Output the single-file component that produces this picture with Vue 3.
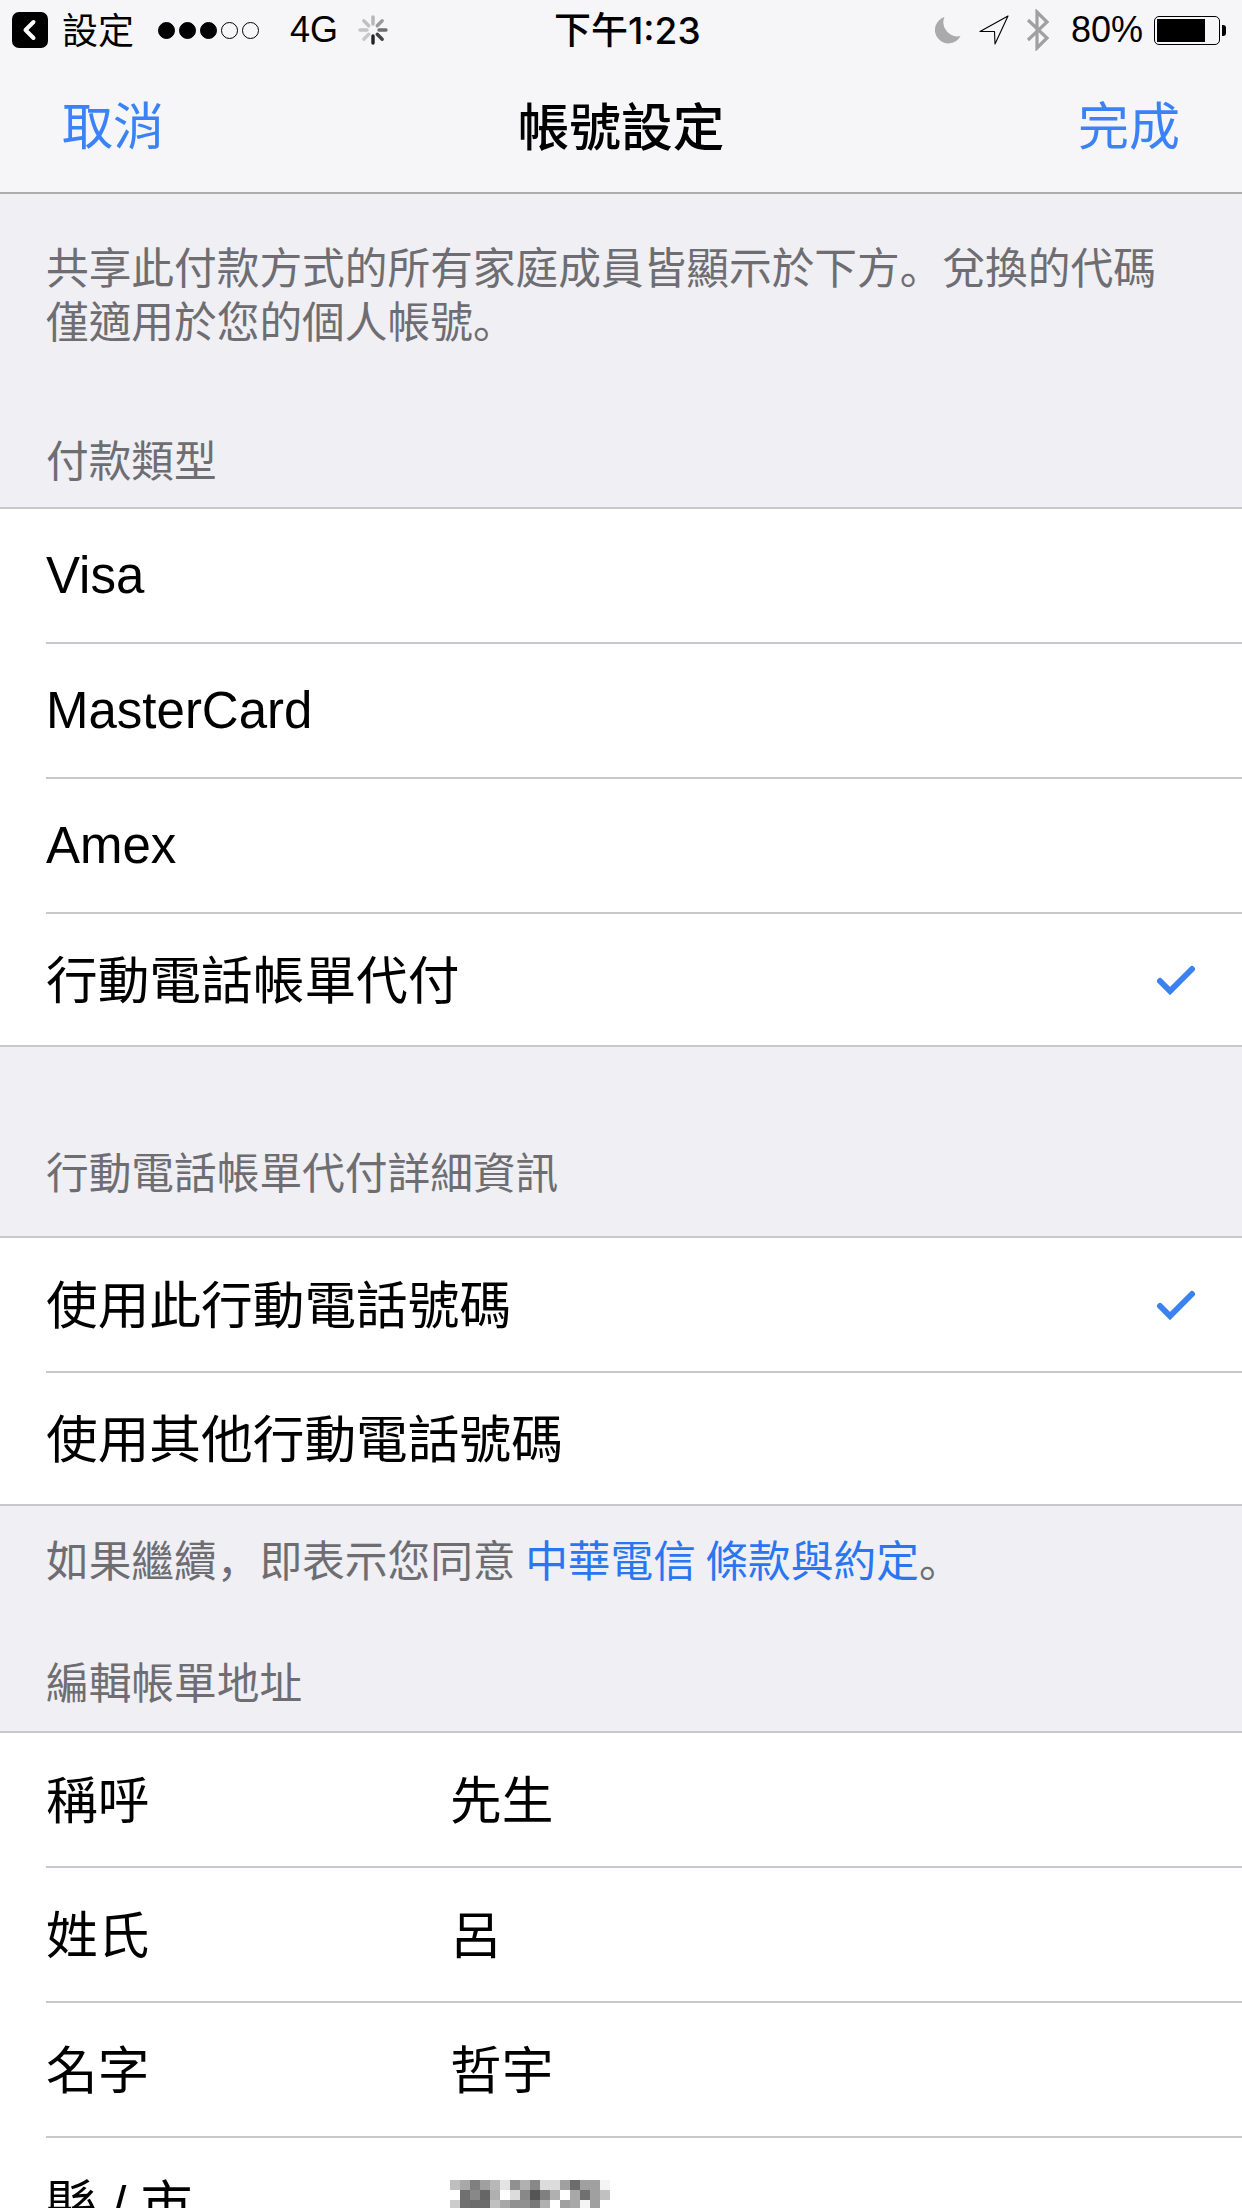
<template>
  <div class="screen" lang="zh-Hant">
    <header class="top">
      <div class="status">
        <div class="status-left">
          <svg class="back-badge" width="36" height="36" viewBox="0 0 36 36">
            <rect width="36" height="36" rx="7" fill="#000" />
            <path d="M21.5 10 L13.5 18 L21.5 26" fill="none" stroke="#fff" stroke-width="4" stroke-linecap="round" stroke-linejoin="round" />
          </svg>
          <span class="back-label">設定</span>
          <div class="signal">
            <span v-for="n in 5" :key="n" :class="['dot', { on: n <= 3 }]"></span>
          </div>
          <span class="carrier">4G</span>
          <svg class="spinner" width="32" height="32" viewBox="0 0 32 32">
            <line
              v-for="s in spokes"
              :key="s.angle"
              x1="16" y1="3" x2="16" y2="10"
              stroke-width="3.4"
              stroke-linecap="round"
              :stroke="s.color"
              :transform="`rotate(${s.angle} 16 16)`"
            />
          </svg>
        </div>
        <div class="clock">下午1:23</div>
        <div class="status-right">
          <svg class="moon" width="28" height="28" viewBox="0 0 28 28">
            <path d="M11.5 1 A13.5 13.5 0 1 0 27.5 20 A14 14 0 0 1 11.5 1 Z" fill="#aaa" />
          </svg>
          <svg class="arrow" width="30" height="30" viewBox="0 0 30 30">
            <path d="M29 1 L1 16.5 L15.5 16.5 L16 29 Z" fill="none" stroke="#000" stroke-width="1.1" stroke-linejoin="round" />
          </svg>
          <svg class="bt" width="24" height="42" viewBox="0 0 24 42">
            <path d="M2 11 L21 29 L11 39 L11 3 L21 13 L2 31" fill="none" stroke="#a0a0a0" stroke-width="3.2" />
          </svg>
          <span class="battery-text">80%</span>
          <div class="battery"><div class="battery-fill" :style="{ width: batteryLevel + '%' }"></div></div>
          <span class="battery-nub"></span>
        </div>
      </div>
      <nav class="nav">
        <span class="nav-btn">取消</span>
        <span class="nav-title">帳號設定</span>
        <span class="nav-btn">完成</span>
      </nav>
    </header>

    <p class="note">共享此付款方式的所有家庭成員皆顯示於下方<span class="punct" lang="zh-Hans">。</span>兌換的代碼<br />僅適用於您的個人帳號<span class="punct" lang="zh-Hans">。</span></p>

    <h4 class="section-title first">付款類型</h4>
    <ul class="group">
      <li v-for="item in paymentTypes" :key="item.name" class="row">
        <div class="row-inner">
          <span :class="{ latin: item.latin }">{{ item.name }}</span>
          <svg v-if="item.checked" class="check" width="42" height="34" viewBox="0 0 42 34">
            <path d="M5 18 L15 28 L37 6" fill="none" stroke="#3b82f0" stroke-width="6" stroke-linecap="round" />
          </svg>
        </div>
      </li>
    </ul>

    <h4 class="section-title second">行動電話帳單代付詳細資訊</h4>
    <ul class="group">
      <li v-for="item in phoneOptions" :key="item.name" class="row">
        <div class="row-inner">
          <span>{{ item.name }}</span>
          <svg v-if="item.checked" class="check" width="42" height="34" viewBox="0 0 42 34">
            <path d="M5 18 L15 28 L37 6" fill="none" stroke="#3b82f0" stroke-width="6" stroke-linecap="round" />
          </svg>
        </div>
      </li>
    </ul>
    <p class="terms">如果繼續<span class="punct" lang="zh-Hans">，</span>即表示您同意 <span class="link">中華電信 條款與約定</span><span class="punct" lang="zh-Hans">。</span></p>

    <h4 class="section-title third">編輯帳單地址</h4>
    <ul class="group">
      <li v-for="field in addressFields" :key="field.label" class="row">
        <div class="row-inner field">
          <span class="field-label">{{ field.label }}</span>
          <span v-if="field.value">{{ field.value }}</span>
          <div v-else class="mosaic">
            <i v-for="(c, i) in mosaic" :key="i" :style="{ background: c }"></i>
          </div>
        </div>
      </li>
    </ul>
  </div>
</template>

<script setup>
const batteryLevel = 80

const spokes = [
  { angle: 0, color: '#b5b5b5' },
  { angle: 45, color: '#9a9a9a' },
  { angle: 90, color: '#6e6e6e' },
  { angle: 135, color: '#444' },
  { angle: 180, color: '#222' },
  { angle: 225, color: '#c8c8c8' },
  { angle: 270, color: '#c4c4c4' },
  { angle: 315, color: '#c0c0c0' }
]

const paymentTypes = [
  { name: 'Visa', latin: true },
  { name: 'MasterCard', latin: true },
  { name: 'Amex', latin: true },
  { name: '行動電話帳單代付', checked: true }
]

const phoneOptions = [
  { name: '使用此行動電話號碼', checked: true },
  { name: '使用其他行動電話號碼' }
]

const addressFields = [
  { label: '稱呼', value: '先生' },
  { label: '姓氏', value: '呂' },
  { label: '名字', value: '哲宇' },
  { label: '縣 / 市', value: '' }
]

// 打了馬賽克的區塊
const mosaic = [
  '#bfbfbf', '#a8a8a8', '#7f7f7f', '#a0a0a0', '#b8b8b8', '#e4e4e4', '#909090', '#b0b0b0',
  '#888888', '#dcdcdc', '#dcdcdc', '#a0a0a0', '#6c6c6c', '#a0a0a0', '#a0a0a0', '#f4f4f4',
  '#ffffff', '#707070', '#888888', '#666666', '#b0b0b0', '#ffffff', '#dcdcdc', '#888888',
  '#555555', '#808080', '#b0b0b0', '#ffffff', '#a8a8a8', '#707070', '#a0a0a0', '#c0c0c0',
  '#cccccc', '#707070', '#6c6c6c', '#6c6c6c', '#c0c0c0', '#a8a8a8', '#909090', '#909090',
  '#787878', '#b0b0b0', '#ffffff', '#a0a0a0', '#a8a8a8', '#f4f4f4', '#a0a0a0', '#ffffff'
]
</script>

<style>
html,
body {
  margin: 0;
  background: #efeff4;
}
</style>

<style scoped>
.screen {
  width: 1242px;
  height: 2208px;
  overflow: hidden;
  background: #efeff4;
  color: #000;
  font-family: "Liberation Sans", "Noto Sans CJK TC", sans-serif;
}

.top {
  height: 192px;
  background: #f6f6f8;
  border-bottom: 2px solid #adadad;
}

.status {
  height: 60px;
  padding: 0 16px 0 12px;
  display: flex;
  align-items: center;
  justify-content: space-between;
  font-size: 36px;
  position: relative;
}

.status-left,
.status-right {
  display: flex;
  align-items: center;
}

.back-label {
  margin-left: 14px;
  width: 96px;
  line-height: 44px;
  margin-top: 4px;
}

.signal {
  display: flex;
  gap: 4px;
}

.dot {
  width: 17px;
  height: 17px;
  box-sizing: border-box;
  border-radius: 50%;
  border: 1.5px solid #000;
}

.dot.on {
  background: #000;
}

.carrier {
  margin-left: 31px;
}

.spinner {
  margin-left: 19px;
}

.clock {
  position: absolute;
  left: 554px;
  top: 9px;
  font-family: Inter, "Noto Sans CJK TC", sans-serif;
  font-size: 37px;
  font-weight: 500;
  line-height: 44px;
}

.moon {
  margin-right: 18px;
}

.arrow {
  margin-right: 17px;
}

.bt {
  margin-right: 21px;
}

.battery-text {
  margin-right: 11px;
}

.battery {
  width: 66px;
  height: 29px;
  box-sizing: border-box;
  border: 1.5px solid #000;
  border-radius: 5px;
  padding: 2px;
}

.battery-fill {
  height: 100%;
  background: #000;
}

.battery-nub {
  width: 4px;
  height: 11px;
  margin-left: 2px;
  background: #000;
  border-radius: 0 3px 3px 0;
}

.nav {
  height: 132px;
  box-sizing: border-box;
  padding: 0 62px 6px;
  display: flex;
  align-items: center;
  justify-content: space-between;
  font-size: 51px;
}

.nav-btn {
  color: #3a82f6;
}

.nav-title {
  font-size: 51.7px;
  font-weight: 500;
}

.note,
.terms,
.section-title {
  margin: 0;
  padding: 0 46px;
  font-family: "Noto Sans CJK TC", sans-serif;
  font-size: 42.7px;
  line-height: 54px;
  font-weight: 400;
  color: #6d6d72;
}

.note {
  padding-top: 44px;
}

.punct {
  font-family: "Noto Sans CJK SC", sans-serif;
}

.section-title.first {
  padding-top: 85px;
  padding-bottom: 22px;
}

.section-title.second {
  padding-top: 96px;
  padding-bottom: 39px;
}

.section-title.third {
  padding-top: 68px;
  padding-bottom: 24px;
}

.terms {
  padding-top: 25px;
}

.link {
  color: #2a76f0;
}

.group {
  list-style: none;
  margin: 0;
  padding: 0;
  background: #fff;
  border-top: 2px solid #c8c7cc;
  border-bottom: 2px solid #c8c7cc;
  font-size: 51.7px;
}

.row {
  padding-left: 46px;
}

.row-inner {
  height: 135px;
  box-sizing: border-box;
  padding: 0 45px 6px 0;
  display: flex;
  align-items: center;
  justify-content: space-between;
  border-bottom: 2px solid #c8c7cc;
}

.row:last-child .row-inner {
  height: 131px;
  border-bottom: none;
}

.latin {
  font-size: 51px;
  margin-top: 6px;
}

.check {
  display: block;
  margin-top: 6px;
}

.field {
  justify-content: flex-start;
}

.field-label {
  width: 404px;
}

.mosaic {
  width: 160px;
  align-self: flex-start;
  margin-top: 42px;
  display: grid;
  grid-template-columns: repeat(16, 10px);
  grid-auto-rows: 10px;
}
</style>
